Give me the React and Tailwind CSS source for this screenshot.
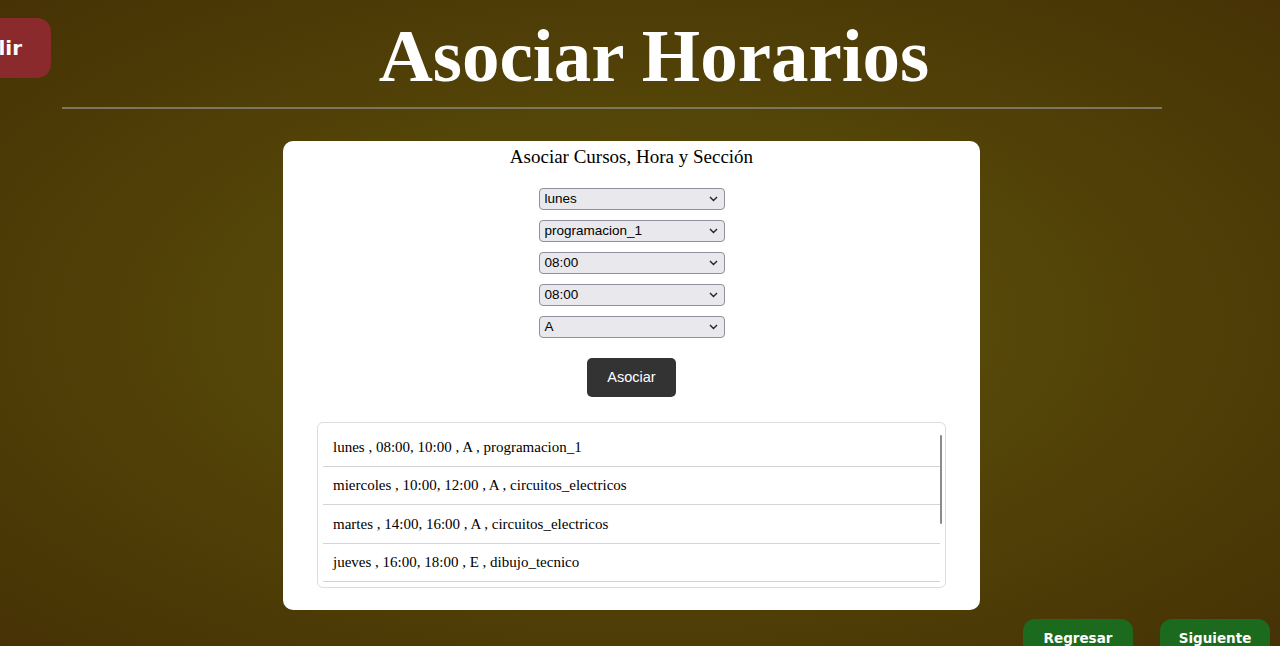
import React from "react";

const selects = [
  ["lunes", ["lunes", "martes", "miercoles", "jueves", "viernes"]],
  ["programacion_1", ["programacion_1", "circuitos_electricos", "dibujo_tecnico"]],
  ["08:00", ["08:00", "10:00", "12:00"]],
  ["08:00", ["08:00", "10:00", "12:00"]],
  ["A", ["A", "B", "E"]],
];

const rows = [
  "lunes , 08:00, 10:00 , A , programacion_1",
  "miercoles , 10:00, 12:00 , A , circuitos_electricos",
  "martes , 14:00, 16:00 , A , circuitos_electricos",
  "jueves , 16:00, 18:00 , E , dibujo_tecnico",
];

export default function App() {
  return (
    <div className="relative h-[646px] w-[1280px] overflow-hidden bg-[radial-gradient(ellipse_at_center,#5f560a_0%,#544508_45%,#463205_100%)] font-['Liberation_Serif',serif]">
      <button className="absolute left-[-40px] top-[18px] h-[60px] w-[91px] rounded-[14px] bg-[#8a2a2d] pr-[29px] text-right font-['DejaVu_Sans',sans-serif] text-[20px] font-bold text-white">
        Salir
      </button>

      <h1 className="pl-[28px] pt-[14px] text-center text-[75px] font-bold leading-[84px] text-white">
        Asociar Horarios
      </h1>
      <div className="ml-[62px] mt-[9px] h-[2px] w-[1100px] bg-[#7a7660]" />

      <div className="ml-[283px] mt-[32px] flex h-[469px] w-[697px] flex-col items-center rounded-[10px] bg-white">
        <h2 className="mt-[5px] text-[19px] leading-[22px] text-black">
          Asociar Cursos, Hora y Sección
        </h2>

        <div className="mt-[20px] flex flex-col gap-[10px]">
          {selects.map(([val], i) => (
            <div
              key={i}
              className="relative flex h-[22px] w-[186px] items-center rounded-[4px] border border-[#8f8f9d] bg-[#e9e9ed] pl-[5px] font-['Liberation_Sans',sans-serif] text-[13.5px] text-black"
            >
              <span>{val}</span>
              <svg
                className="absolute right-[6px] top-[7px]"
                width="9"
                height="6"
                viewBox="0 0 9 6"
                fill="none"
              >
                <path d="M1 1l3.5 3.5L8 1" stroke="#222" strokeWidth="1.4" />
              </svg>
            </div>
          ))}
        </div>

        <button className="mt-[20px] h-[39px] w-[89px] rounded-[5px] bg-[#333333] font-['Liberation_Sans',sans-serif] text-[14.5px] text-white">
          Asociar
        </button>

        <div className="relative mt-[25px] h-[166px] w-[629px] rounded-[6px] border border-[#dcdcdc] px-[5px] pt-[5px]">
          {rows.map((r, i) => (
            <div
              key={i}
              className="flex h-[38.6px] items-center border-b border-[#d4d4d4] pl-[10px] text-[15px] text-black"
            >
              {r}
            </div>
          ))}
          <div className="absolute right-[3px] top-[12px] h-[89px] w-[2px] rounded bg-[#8a8a8a]" />
        </div>
      </div>

      <div className="absolute left-[1023px] top-[619px] flex gap-[27px]">
        <button className="h-[40px] w-[110px] rounded-[12px] bg-[#1b6a1e] font-['DejaVu_Sans',sans-serif] text-[13.5px] font-bold text-white">
          <span className="relative top-[-1px]">Regresar</span>
        </button>
        <button className="h-[40px] w-[110px] rounded-[12px] bg-[#1b6a1e] font-['DejaVu_Sans',sans-serif] text-[13.5px] font-bold text-white">
          <span className="relative top-[-1px]">Siguiente</span>
        </button>
      </div>
    </div>
  );
}
